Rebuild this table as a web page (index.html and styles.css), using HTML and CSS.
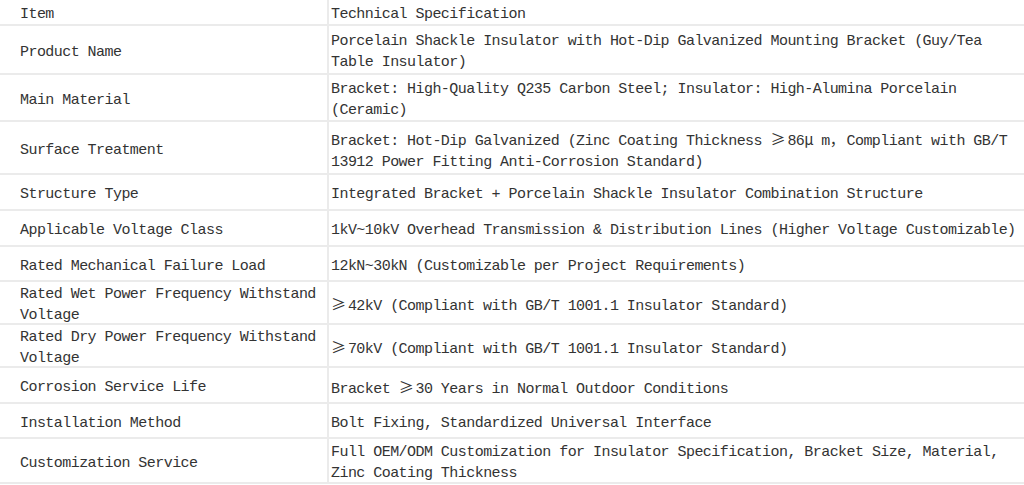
FILE: index.html
```html
<!DOCTYPE html>
<html lang="en">
<head>
<meta charset="utf-8">
<title>Technical Specification</title>
<link rel="stylesheet" href="styles.css">
</head>
<body>
<div class="spec">
  <div class="cell key"><span class="txt">Item</span></div>
  <div class="cell val"><span class="txt">Technical Specification</span></div>

  <div class="cell key"><span class="txt">Product Name</span></div>
  <div class="cell val"><span class="txt">Porcelain Shackle Insulator with Hot-Dip Galvanized Mounting Bracket (Guy/Tea<br>Table Insulator)</span></div>

  <div class="cell key"><span class="txt">Main Material</span></div>
  <div class="cell val"><span class="txt">Bracket: High-Quality Q235 Carbon Steel; Insulator: High-Alumina Porcelain<br>(Ceramic)</span></div>

  <div class="cell key"><span class="txt">Surface Treatment</span></div>
  <div class="cell val"><span class="txt">Bracket: Hot-Dip Galvanized (Zinc Coating Thickness <span class="fw">≥</span>86<span class="fw">μ</span>m<span class="fw">，</span>Compliant with GB/T<br>13912 Power Fitting Anti-Corrosion Standard)</span></div>

  <div class="cell key"><span class="txt">Structure Type</span></div>
  <div class="cell val"><span class="txt">Integrated Bracket + Porcelain Shackle Insulator Combination Structure</span></div>

  <div class="cell key"><span class="txt">Applicable Voltage Class</span></div>
  <div class="cell val"><span class="txt">1kV~10kV Overhead Transmission &amp; Distribution Lines (Higher Voltage Customizable)</span></div>

  <div class="cell key"><span class="txt">Rated Mechanical Failure Load</span></div>
  <div class="cell val"><span class="txt">12kN~30kN (Customizable per Project Requirements)</span></div>

  <div class="cell key"><span class="txt">Rated Wet Power Frequency Withstand<br>Voltage</span></div>
  <div class="cell val"><span class="txt"><span class="fw">≥</span>42kV (Compliant with GB/T 1001.1 Insulator Standard)</span></div>

  <div class="cell key"><span class="txt">Rated Dry Power Frequency Withstand<br>Voltage</span></div>
  <div class="cell val"><span class="txt"><span class="fw">≥</span>70kV (Compliant with GB/T 1001.1 Insulator Standard)</span></div>

  <div class="cell key"><span class="txt">Corrosion Service Life</span></div>
  <div class="cell val"><span class="txt">Bracket <span class="fw">≥</span>30 Years in Normal Outdoor Conditions</span></div>

  <div class="cell key"><span class="txt">Installation Method</span></div>
  <div class="cell val"><span class="txt">Bolt Fixing, Standardized Universal Interface</span></div>

  <div class="cell key"><span class="txt">Customization Service</span></div>
  <div class="cell val"><span class="txt">Full OEM/ODM Customization for Insulator Specification, Bracket Size, Material,<br>Zinc Coating Thickness</span></div>
</div>
</body>
</html>
```

FILE: styles.css
```css
html, body {
  margin: 0;
  padding: 0;
  background: #ffffff;
  overflow: hidden;
}

.spec {
  display: grid;
  grid-template-columns: 329px 1fr;
  grid-template-rows: 26px 49px 47px 53px 36px 36px 35px 43px 43px 36px 35px 45px;
  font-family: "Liberation Mono", "Noto Sans CJK SC", monospace;
  font-size: 15px;
  letter-spacing: -0.55px;
  line-height: 21px;
  color: #333333;
}

.cell {
  display: flex;
  align-items: center;
  box-sizing: border-box;
  border-bottom: 2px solid #ebebeb;
  padding-top: 5px;
  white-space: nowrap;
}

.spec .cell:nth-child(1),
.spec .cell:nth-child(2) {
  padding-top: 4px;
}

.txt {
  display: block;
}

.key {
  padding-left: 20px;
  border-right: 2px solid #ebebeb;
}

.val {
  padding-left: 2px;
}

.fw {
  display: inline-block;
  width: 16.9px;
  letter-spacing: 0;
  font-family: "Noto Sans CJK SC", "Liberation Mono", sans-serif;
}
```
